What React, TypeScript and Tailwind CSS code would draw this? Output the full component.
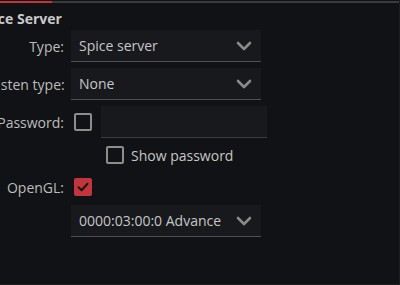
import React from "react";

const Chevron = () => (
  <svg width="16" height="10" viewBox="0 0 16 10" className="shrink-0">
    <path d="M2 2 L8 8 L14 2" stroke="#8a8a8a" strokeWidth="2.6" fill="none" strokeLinecap="round" strokeLinejoin="round" />
  </svg>
);

const Select = ({ text }: { text: string }) => (
  <div className="flex items-center justify-between w-[190px] h-[32px] bg-[#18191c] border-b border-[#4f5052] pl-[8px] pr-[9px] text-[14px] text-[#c6c6c6]">
    <span className="whitespace-nowrap">{text}</span>
    <Chevron />
  </div>
);

const Box = ({ checked }: { checked?: boolean }) =>
  checked ? (
    <div className="w-[18px] h-[18px] rounded-[2px] bg-[#c3353d] flex items-center justify-center">
      <svg width="14" height="14" viewBox="0 0 14 14">
        <path d="M2.5 7.2 L5.6 10.2 L11.5 3.8" stroke="#151515" strokeWidth="2" fill="none" strokeLinecap="round" strokeLinejoin="round" />
      </svg>
    </div>
  ) : (
    <div className="w-[18px] h-[18px] rounded-[2px] border-2 border-[#8d8d8d]" />
  );

export default function App() {
  return (
    <div
      className="w-[400px] h-[285px] overflow-hidden bg-[#111215] relative border-r border-b border-[#1c1d1f]"
      style={{ fontFamily: '"Open Sans", "Noto Sans", sans-serif' }}
    >
      <div className="flex h-[2px] mt-[1px]">
        <div className="w-[52px] bg-[#c3353d]" />
        <div className="flex-1 bg-[#3a3b3d]" />
      </div>
      <div className="ml-[-23px] mt-[6px] text-[14px] font-bold text-[#cacaca] leading-[20px] whitespace-nowrap">Spice Server</div>
      <div className="ml-[-10px] mt-[1px] grid grid-cols-[74px_auto] gap-x-[7px] items-center text-[14px] text-[#bcbcbc]">
        <div className="text-right whitespace-nowrap">Type:</div>
        <Select text="Spice server" />
        <div className="text-right whitespace-nowrap mt-[6px]">Listen type:</div>
        <div className="mt-[6px]">
          <Select text="None" />
        </div>
        <div className="text-right whitespace-nowrap mt-[6px]">Password:</div>
        <div className="flex items-center gap-[9px] pl-[3px] mt-[6px]">
          <Box />
          <div className="w-[166px] h-[32px] bg-[#18191c] border-b border-[#3c3d3f]" />
        </div>
        <div />
        <div className="flex items-center gap-[7px] pl-[35px] h-[34px]">
          <Box />
          <span className="text-[#c6c6c6]">Show password</span>
        </div>
        <div className="text-right whitespace-nowrap">OpenGL:</div>
        <div className="flex items-center pl-[3px] h-[30px]">
          <Box checked />
        </div>
        <div />
        <div className="mt-[3px]">
          <Select text="0000:03:00:0 Advance" />
        </div>
      </div>
    </div>
  );
}
